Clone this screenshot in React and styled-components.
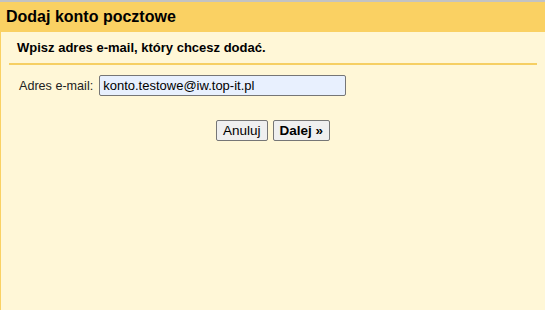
import React from 'react'
import styled, {createGlobalStyle} from 'styled-components'

const Global = createGlobalStyle`
    html, body {
        margin: 0;
        padding: 0;
        height: 100%;
        background: #fff7d7;
    }
    #root {
        height: 100%;
    }
`

const Page = styled.div`
    height: 310px;
    display: flex;
    flex-direction: column;
    border-top: 2px solid #c3c3c3;
    box-sizing: border-box;
    font-family: Arial, "Liberation Sans", sans-serif;
    color: #000;
`

const Header = styled.div`
    background: #fad163;
    height: 30px;
    padding-left: 6px;
    display: flex;
    align-items: center;
    font-size: 16px;
    font-weight: bold;
`

const Body = styled.div`
    flex: 1;
    background: #fff7d7;
    border-left: 1px solid #fad163;
    padding: 0 8px;
`

const Subtitle = styled.div`
    font-size: 13px;
    font-weight: bold;
    padding: 8px 0 0 8px;
    box-sizing: border-box;
    border-bottom: 2px solid #f6cf63;
    line-height: 15px;
    height: 33px;
`

const Row = styled.div`
    display: flex;
    align-items: center;
    gap: 6px;
    margin-top: 10px;
    padding-left: 10px;
`

const Label = styled.label`
    font-size: 12.6px;
    color: #222;
`

const Input = styled.input`
    width: 247px;
    height: 21px;
    box-sizing: border-box;
    border: 1px solid #767676;
    border-radius: 2px;
    background: #e8f0fe;
    font-family: Arial, "Liberation Sans", sans-serif;
    font-size: 13px;
    padding: 0 3px;
    color: #000;
    outline: none;
`

const Actions = styled.div`
    display: flex;
    justify-content: center;
    gap: 5px;
    margin-top: 24px;
`

const Button = styled.button`
    height: 21px;
    padding: 0 6px;
    font-family: Arial, "Liberation Sans", sans-serif;
    font-size: 13.5px;
    font-weight: ${p => (p.$primary ? 'bold' : 'normal')};
    background: #efefef;
    border: 1px solid #767676;
    border-radius: 2px;
    color: #000;
`

const App = () => {
    return (
        <>
            <Global />
            <Page>
                <Header>Dodaj konto pocztowe</Header>
                <Body>
                    <Subtitle>Wpisz adres e-mail, który chcesz dodać.</Subtitle>
                    <Row>
                        <Label>Adres e-mail:</Label>
                        <Input defaultValue="konto.testowe@iw.top-it.pl" />
                    </Row>
                    <Actions>
                        <Button>Anuluj</Button>
                        <Button $primary>Dalej »</Button>
                    </Actions>
                </Body>
            </Page>
        </>
    )
}

export default App
